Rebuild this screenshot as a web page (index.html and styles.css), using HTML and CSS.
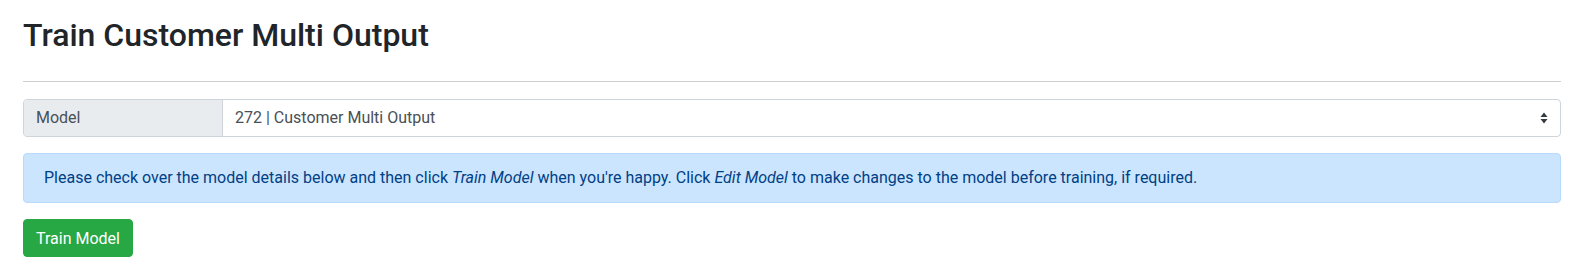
FILE: index.html
```html
<!DOCTYPE html>
<html>
<head>
<meta charset="utf-8">
<link rel="stylesheet" href="styles.css">
</head>
<body>
<div class="container">
  <h2 class="title">Train Customer Multi Output</h2>
  <hr class="divider">
  <div class="input-group">
    <div class="prepend">Model</div>
    <div class="select">
      <span>272 | Customer Multi Output</span>
      <svg class="caret" width="8" height="12" viewBox="0 0 8 12"><path d="M4 0.5L7.5 5H0.5Z M4 11.5L0.5 7H7.5Z" fill="#343a40"/></svg>
    </div>
  </div>
  <div class="alert">Please check over the model details below and then click <em>Train Model</em> when you're happy. Click <em>Edit Model</em> to make changes to the model before training, if required.</div>
  <button class="btn">Train Model</button>
</div>
</body>
</html>
```
FILE: styles.css
```css
* { box-sizing: border-box; }
html { overflow: hidden; }
html, body { margin: 0; padding: 0; background: #fff; }
body {
  font-family: Roboto, "Liberation Sans", sans-serif;
  font-size: 16px;
  line-height: 1.5;
  color: #212529;
}
.container {
  padding: 8px 23px 0 23px;
}
.title {
  margin: 0;
  padding-top: 8px;
  font-size: 32px;
  font-weight: 500;
  line-height: 38px;
  color: #212529;
}
.divider {
  margin: 27px 0 17px 0;
  border: 0;
  border-top: 1px solid #cfcfcf;
  height: 0;
}
.input-group {
  display: flex;
  height: 38px;
  border: 1px solid #ced4da;
  border-radius: 4px;
  overflow: hidden;
  color: #495057;
}
.prepend {
  width: 199px;
  flex: none;
  background: #e9ecef;
  border-right: 1px solid #ced4da;
  padding: 0 12px;
  display: flex;
  align-items: center;
}
.select {
  flex: 1;
  display: flex;
  align-items: center;
  justify-content: space-between;
  padding: 0 12px;
}
.caret { display: block; }
.alert {
  margin-top: 16px;
  padding: 12px 20px;
  background: #cce5ff;
  border: 1px solid #b8daff;
  border-radius: 4px;
  color: #004085;
  line-height: 24px;
}
.btn {
  margin-top: 16px;
  display: block;
  height: 38px;
  padding: 0 12px;
  background: #28a745;
  border: 1px solid #28a745;
  border-radius: 4px;
  color: #fff;
  font-family: Roboto, "Liberation Sans", sans-serif;
  font-size: 16px;
}
```
